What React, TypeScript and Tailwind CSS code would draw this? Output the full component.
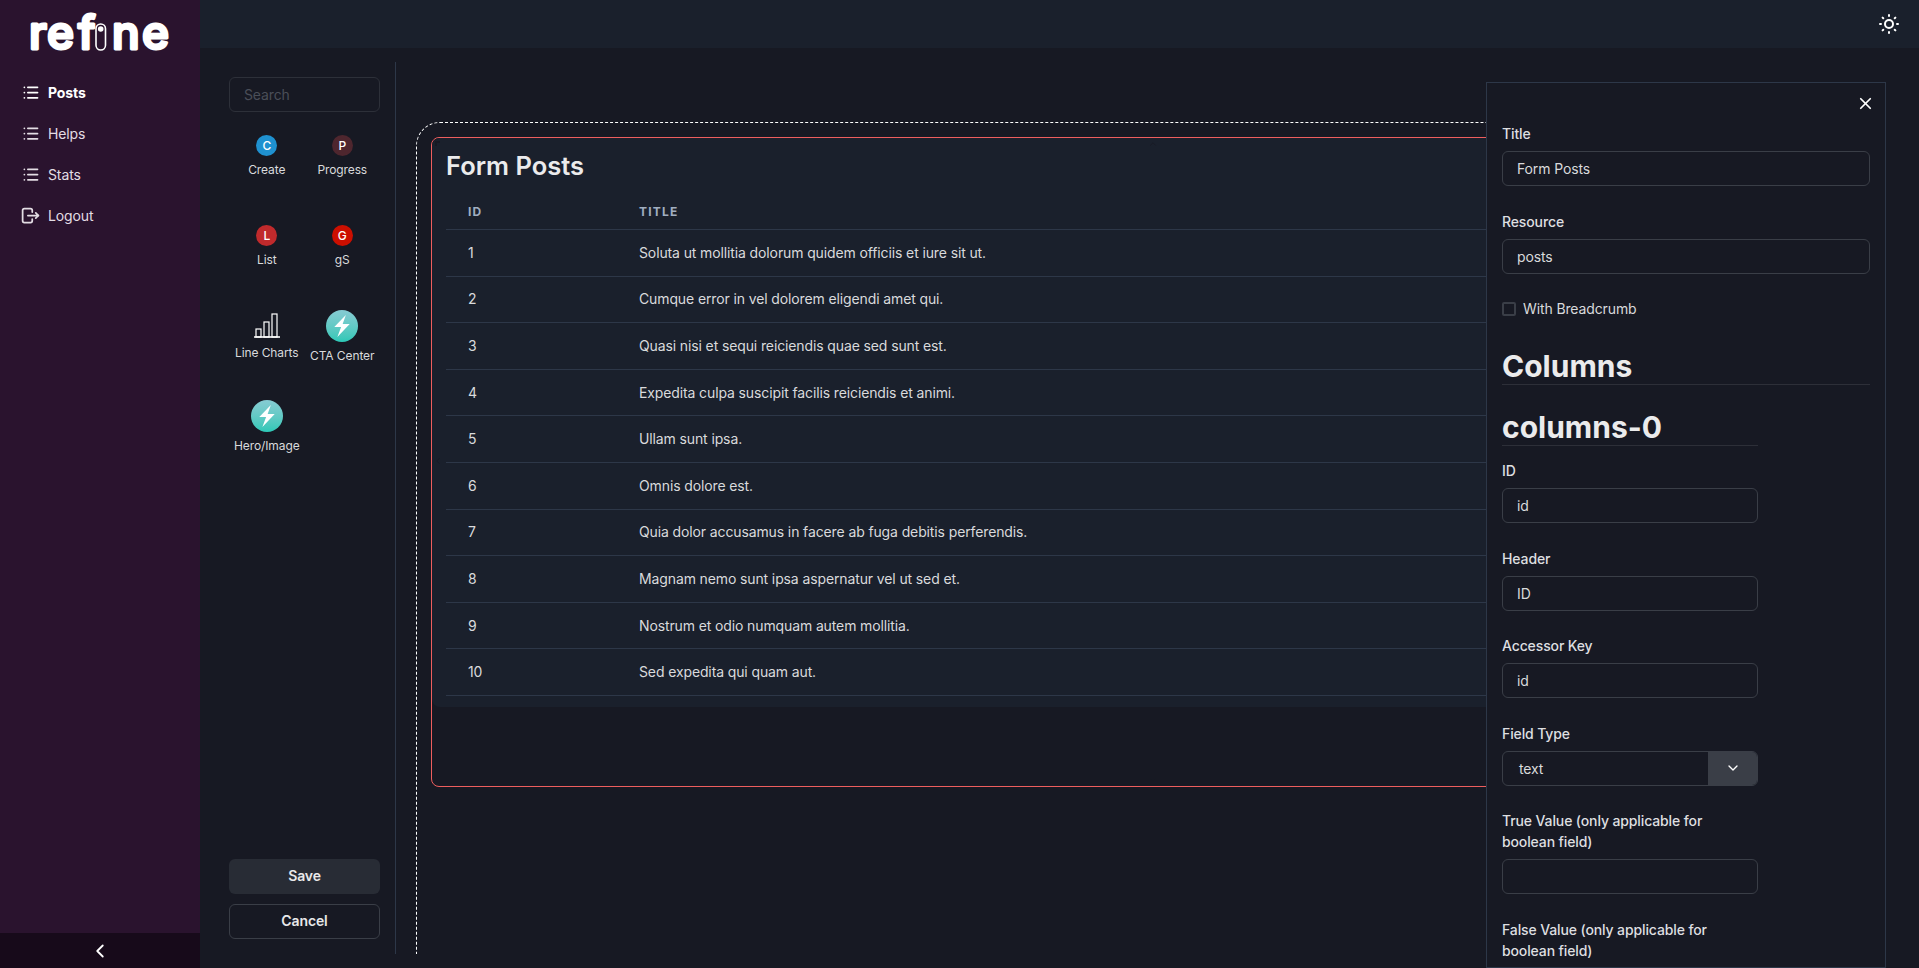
import { TbChevronDown, TbChevronLeft, TbChevronUp, TbList, TbLogout, TbSun } from "react-icons/tb";
import { X } from "lucide-react";

const navItems = [
  { label: "Posts", active: true },
  { label: "Helps" },
  { label: "Stats" },
];

const rows = [
  "Soluta ut mollitia dolorum quidem officiis et iure sit ut.",
  "Cumque error in vel dolorem eligendi amet qui.",
  "Quasi nisi et sequi reiciendis quae sed sunt est.",
  "Expedita culpa suscipit facilis reiciendis et animi.",
  "Ullam sunt ipsa.",
  "Omnis dolore est.",
  "Quia dolor accusamus in facere ab fuga debitis perferendis.",
  "Magnam nemo sunt ipsa aspernatur vel ut sed et.",
  "Nostrum et odio numquam autem mollitia.",
  "Sed expedita qui quam aut.",
];

function Logo() {
  const letters = [
    { ch: "r", x: 29 },
    { ch: "e", x: 47 },
    { ch: "f", x: 78 },
    { ch: "n", x: 112 },
    { ch: "e", x: 142 },
  ];
  return (
    <svg width="200" height="64" viewBox="0 0 200 64" className="block overflow-visible">
      {letters.map((l, i) => (
        <text
          key={i}
          x={l.x}
          y="49"
          fontFamily="Inter, sans-serif"
          fontSize="46"
          fontWeight="500"
          fill="#fff"
          stroke="#fff"
          strokeWidth="3"
          strokeLinejoin="round"
        >
          {l.ch}
        </text>
      ))}
      <rect x="96" y="24" width="9.5" height="26" rx="4.75" fill="#2a132e" stroke="#fff" strokeWidth="1.6" />
      <circle cx="100.7" cy="29" r="2.8" fill="#fff" />
    </svg>
  );
}

function Bolt() {
  return (
    <svg width="18" height="22" viewBox="0 0 16 20" fill="#fff">
      <polygon points="11.5,0 1,11 7.2,11 3.8,20 15,8.2 8.6,8.2" />
    </svg>
  );
}

function BarsIcon() {
  return (
    <svg width="28" height="25" viewBox="0 0 28 25" fill="none" stroke="#fff" strokeWidth="1.2">
      <rect x="3" y="16" width="5" height="8" />
      <rect x="11" y="9" width="5" height="15" />
      <rect x="19" y="1" width="5" height="23" />
      <path d="M1 24h26" strokeWidth="1.6" />
    </svg>
  );
}

function Letter({ ch, color }: { ch: string; color: string }) {
  return (
    <div
      className="flex h-[21px] w-[21px] items-center justify-center rounded-full text-xs font-medium text-white mt-[5px]"
      style={{ backgroundColor: color }}
    >
      {ch}
    </div>
  );
}

function Teal() {
  return (
    <div className="flex h-8 w-8 items-center justify-center rounded-full bg-gradient-to-b from-[#86cbd3] to-[#2bc8b7]">
      <Bolt />
    </div>
  );
}

function Palette() {
  return (
    <div className="grid grid-cols-2 auto-rows-[90px] mt-[18px] text-[12px] leading-[18px] tracking-[-0.1px] text-[#d9dadc] text-center">
      <div className="flex flex-col items-center">
        <Letter ch="C" color="#1f91d0" />
        <span className="mt-[5px]">Create</span>
      </div>
      <div className="flex flex-col items-center">
        <Letter ch="P" color="#4e262e" />
        <span className="mt-[5px]">Progress</span>
      </div>
      <div className="flex flex-col items-center">
        <Letter ch="L" color="#c02a2c" />
        <span className="mt-[5px]">List</span>
      </div>
      <div className="flex flex-col items-center">
        <Letter ch="G" color="#cc0f00" />
        <span className="mt-[5px]">gS</span>
      </div>
      <div className="flex flex-col items-center">
        <div className="h-[28px] flex items-end">
          <BarsIcon />
        </div>
        <span className="mt-[6px]">Line Charts</span>
      </div>
      <div className="flex flex-col items-center">
        <Teal />
        <span className="mt-[5px]">CTA Center</span>
      </div>
      <div className="flex flex-col items-center">
        <Teal />
        <span className="mt-[5px]">Hero/Image</span>
      </div>
    </div>
  );
}

function Field({ label, value, wide }: { label: string; value: string; wide?: boolean }) {
  return (
    <div className={wide ? "mb-[25px]" : "mb-[24.5px] w-[256px]"}>
      <label className="block mb-[7px] text-sm leading-[21px] font-medium tracking-[-0.12px] text-[#dedfe0]">{label}</label>
      <input
        readOnly
        value={value}
        className="block w-full h-[35px] px-[14px] text-sm tracking-[-0.12px] text-[#d9dadc] bg-transparent border border-[#3a3e47] rounded-md outline-none"
      />
    </div>
  );
}

function Drawer() {
  return (
    <div className="absolute right-[33px] top-[34px] bottom-0 w-[400px] overflow-hidden bg-[#171923] border border-[#2d3748] px-[15px] pt-[40px]">
      <button type="button" className="absolute right-[10.5px] top-[10.5px] text-white">
        <X size={19} strokeWidth={2.2} />
      </button>

      <Field wide label="Title" value="Form Posts" />
      <Field wide label="Resource" value="posts" />

      <div className="flex items-center gap-[7px] h-[21px] -mt-px">
        <span className="w-[14px] h-[14px] border-2 border-[#3a3e47] rounded-[2px]" />
        <span className="text-sm tracking-[-0.12px] text-[#d9dadc]">With Breadcrumb</span>
      </div>

      <h2 className="mt-[29px] text-[30px] leading-9 font-bold text-[#ebebec] border-b border-[#2d2f38]">Columns</h2>

      <div className="w-[256px]">
        <h3 className="mt-[23.5px] mb-[14.5px] text-[30px] leading-9 font-bold text-[#ebebec] border-b border-[#2d2f38]">columns-0</h3>
        <Field label="ID" value="id" />
        <Field label="Header" value="ID" />
        <Field label="Accessor Key" value="id" />

        <div className="mb-[24.5px]">
          <label className="block mb-[7px] text-sm leading-[21px] font-medium tracking-[-0.12px] text-[#dedfe0]">Field Type</label>
          <div className="flex h-[35px] border border-[#3a3e47] rounded-md overflow-hidden">
            <span className="flex-1 pl-[16px] text-sm tracking-[-0.12px] leading-[33px] text-[#d9dadc]">text</span>
            <span className="flex w-[49px] items-center justify-center bg-[#3a3e47] text-white">
              <TbChevronDown size={16} />
            </span>
          </div>
        </div>

        <Field label="True Value (only applicable for boolean field)" value="" />
        <Field label="False Value (only applicable for boolean field)" value="" />
      </div>
    </div>
  );
}

export default function App() {
  return (
    <div className="flex h-screen overflow-hidden bg-[#171923] font-[Inter,sans-serif] text-white">
      {/* Sidebar */}
      <aside className="flex w-[200px] shrink-0 flex-col bg-[#2a132e]">
        <Logo />
        <nav className="mt-2 flex-1">
          {navItems.map((item) => (
            <div
              key={item.label}
              className={`flex h-[41px] items-center gap-[7px] pl-5 text-sm tracking-[-0.12px] ${item.active ? "font-bold text-white" : "text-[#e3dde4]"}`}
            >
              <TbList size={21} />
              {item.label}
            </div>
          ))}
          <div className="flex h-[41px] items-center gap-[7px] pl-5 text-sm tracking-[-0.12px] text-[#e3dde4]">
            <TbLogout size={21} />
            Logout
          </div>
        </nav>
        <div className="flex h-[35px] items-center justify-center bg-[#170a1a]">
          <TbChevronLeft size={22} />
        </div>
      </aside>

      <div className="flex min-w-0 flex-1 flex-col">
        {/* Header */}
        <header className="flex h-12 shrink-0 items-center justify-end bg-[#1a202c] pr-[18px]">
          <TbSun size={24} />
        </header>

        <main className="relative flex min-h-0 flex-1 overflow-hidden py-[14px]">
          {/* Component palette */}
          <div className="flex w-[196px] shrink-0 flex-col border-r border-[#2d3748] pl-[29px] pr-[15px] pt-[15px] pb-[15px]">
            <input
              readOnly
              placeholder="Search"
              className="h-[35px] w-full px-[14px] text-sm tracking-[-0.12px] bg-transparent border border-[#2d3039] rounded-md outline-none placeholder:text-[#4a4e58]"
            />
            <Palette />
            <div className="mt-auto flex flex-col gap-[10px] text-sm font-semibold tracking-[-0.12px] text-[#e8e8e9]">
              <button type="button" className="h-[35px] pb-px rounded-md bg-[#282c35]">Save</button>
              <button type="button" className="h-[35px] pb-px rounded-md border border-[#3a3e47]">Cancel</button>
            </div>
          </div>

          {/* Canvas */}
          <div className="min-w-0 flex-1 overflow-hidden pl-5 pt-[60px]">
            <div className="h-[900px] w-[1300px] rounded-3xl border border-dashed border-white p-[14px]">
              <div className="relative h-[650px] rounded-lg border border-[#ee5e5e]">
                <div className="rounded-lg bg-[#1a202c] pl-[14px] pt-[10px] pb-[11px]">
                  <h1 className="text-[25.5px] leading-9 font-semibold text-[#ebebec]">Form Posts</h1>
                  <div className="mt-[8px] flex h-[38px] pt-[2px] items-center border-b border-[#2d3748] text-xs font-bold uppercase tracking-[0.1em] text-[#a0aec0]">
                    <span className="w-[193px] shrink-0 pl-[22px]">ID</span>
                    <span>Title</span>
                  </div>
                  {rows.map((title, i) => (
                    <div key={i} className="flex h-[46.6px] items-center border-b border-[#2d3748] text-sm tracking-[-0.12px] text-[#d9dadc]">
                      <span className="w-[193px] shrink-0 pl-[22px]">{i + 1}</span>
                      <span>{title}</span>
                    </div>
                  ))}
                </div>

                {/* resize handles */}
                <span className="absolute left-[3px] top-[3px] h-[5px] w-[5px] border-l-2 border-t-2 border-[#171923]" />
                <span className="absolute bottom-[3px] left-[3px] h-[5px] w-[5px] border-b-2 border-l-2 border-[#171923]" />
                <TbChevronUp size={10} className="absolute left-[716px] top-[1px] text-[#171923]" />
                <TbChevronDown size={10} className="absolute bottom-[1px] left-[716px] text-[#171923]" />
                <TbChevronLeft size={10} className="absolute left-[1px] top-[318px] text-[#171923]" />
              </div>
            </div>
          </div>

          <Drawer />
        </main>
      </div>
    </div>
  );
}
